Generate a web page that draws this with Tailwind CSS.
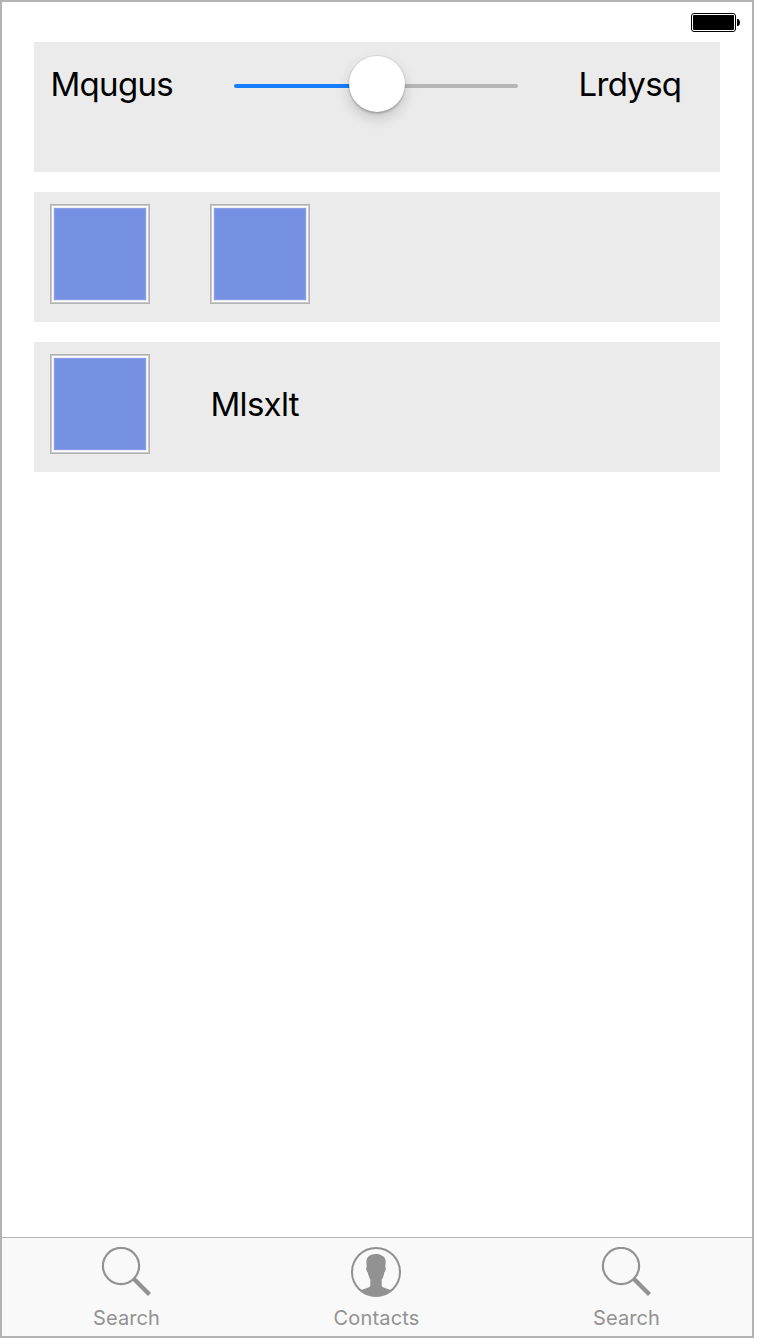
<!DOCTYPE html>
<html lang="en">
<head>
<meta charset="utf-8">
<title>Slider screen</title>
<script src="https://cdn.jsdelivr.net/npm/@tailwindcss/browser@4"></script>
</head>
<body class="bg-white text-black">
<div class="flex h-[1338px] w-[754px] flex-col border-2 border-[#b3b3b3] bg-white font-['Inter',sans-serif]">
  <header class="flex h-10 shrink-0 items-start justify-end pt-[11px] pr-3">
    <svg width="49" height="19" viewBox="0 0 49 19">
      <rect x="0.5" y="0.5" width="44" height="18" rx="2.5" fill="#fff" stroke="#000"/>
      <rect x="2" y="2" width="41" height="15" rx="1" fill="#000"/>
      <path d="M46 6H47C48.3 6.5 49 8 49 9.5S48.3 12.5 47 13H46Z" fill="#000"/>
    </svg>
  </header>
  <main class="flex flex-1 flex-col gap-5 px-8">
    <section class="h-[130px] w-[686px] bg-[#ebebeb] pt-[22px] pl-4">
      <div class="flex h-10 items-center">
        <div class="w-[184px] pl-[0.5px] text-[33px] leading-10"><span class="tracking-[-0.7px]">Mqugus</span></div>
        <div class="relative mt-1 flex h-1 w-[284px]">
          <div class="h-1 w-[142px] rounded-l-full bg-[#147efb]"></div>
          <div class="h-1 w-[142px] rounded-r-full bg-[#b6b6b6]"></div>
          <div class="absolute -top-[28px] left-[115px] size-14 rounded-full bg-white shadow-[0_0_0_1px_rgba(0,0,0,0.06),0_2px_2px_rgba(0,0,0,0.18),0_6px_14px_rgba(0,0,0,0.17)]"></div>
        </div>
        <div class="ml-[60.5px] text-[33px] leading-10"><span class="tracking-[-0.7px]">Lrdysq</span></div>
      </div>
    </section>
    <section class="flex h-[130px] w-[686px] gap-[60px] bg-[#ebebeb] pt-3 pl-4">
      <div class="size-[100px] border border-[#b3b3b3] bg-[#c8c8c8] p-px"><div class="size-full border border-white bg-[#e8ebf6] p-px"><div class="size-full border border-[#879be7] bg-[#758fe2]"></div></div></div>
      <div class="size-[100px] border border-[#b3b3b3] bg-[#c8c8c8] p-px"><div class="size-full border border-white bg-[#e8ebf6] p-px"><div class="size-full border border-[#879be7] bg-[#758fe2]"></div></div></div>
    </section>
    <section class="flex h-[130px] w-[686px] gap-[60px] bg-[#ebebeb] pt-3 pl-4">
      <div class="size-[100px] border border-[#b3b3b3] bg-[#c8c8c8] p-px"><div class="size-full border border-white bg-[#e8ebf6] p-px"><div class="size-full border border-[#879be7] bg-[#758fe2]"></div></div></div>
      <div class="flex h-[100px] items-center pl-[0.5px] text-[33px] leading-10"><span class="tracking-[-0.7px]">Mlsxlt</span></div>
    </section>
  </main>
  <nav class="flex h-[99px] shrink-0 border-t border-[#b2b2b2] bg-[#f9f9f9] text-xl leading-6 text-[#929292]">
    <div class="flex w-[248px] flex-col items-center pt-[9px]">
      <svg width="50" height="50" viewBox="0 0 50 50" fill="none" stroke="currentColor"><circle cx="20" cy="19" r="18.1" stroke-width="2.2"/><path d="M33 32L48.5 47.5" stroke-width="4.4"/></svg>
      <span class="mt-[9px] pl-px tracking-[0.1px]">Search</span>
    </div>
    <div class="flex w-[252px] flex-col items-center pt-[9px]">
      <svg width="50" height="50" viewBox="0 0 50 50"><circle cx="25" cy="25" r="24" fill="none" stroke="currentColor" stroke-width="2"/><path fill="currentColor" d="M25 7C19 7 15.3 10 15.4 15L15.7 20C14.6 20.3 15.2 24 16.6 25C17.4 28.5 18.5 31 19.3 32.5V38.5C18.5 41.3 13 41.5 9.5 43.3C14 47.5 19 49.5 25 49.5S36 47.5 40.5 43.3C37 41.5 31.5 41.3 30.7 38.5V32.5C32 31 32.8 28.5 33.4 25C34.8 24 35.4 20.3 34.3 20L34.7 15C34.8 11 33 9 30.5 8.4C29 7.4 27 7 25 7Z"/></svg>
      <span class="mt-[9px] pl-px tracking-[0.2px]">Contacts</span>
    </div>
    <div class="flex w-[248px] flex-col items-center pt-[9px]">
      <svg width="50" height="50" viewBox="0 0 50 50" fill="none" stroke="currentColor"><circle cx="20" cy="19" r="18.1" stroke-width="2.2"/><path d="M33 32L48.5 47.5" stroke-width="4.4"/></svg>
      <span class="mt-[9px] pl-px tracking-[0.1px]">Search</span>
    </div>
  </nav>
</div>
</body>
</html>
